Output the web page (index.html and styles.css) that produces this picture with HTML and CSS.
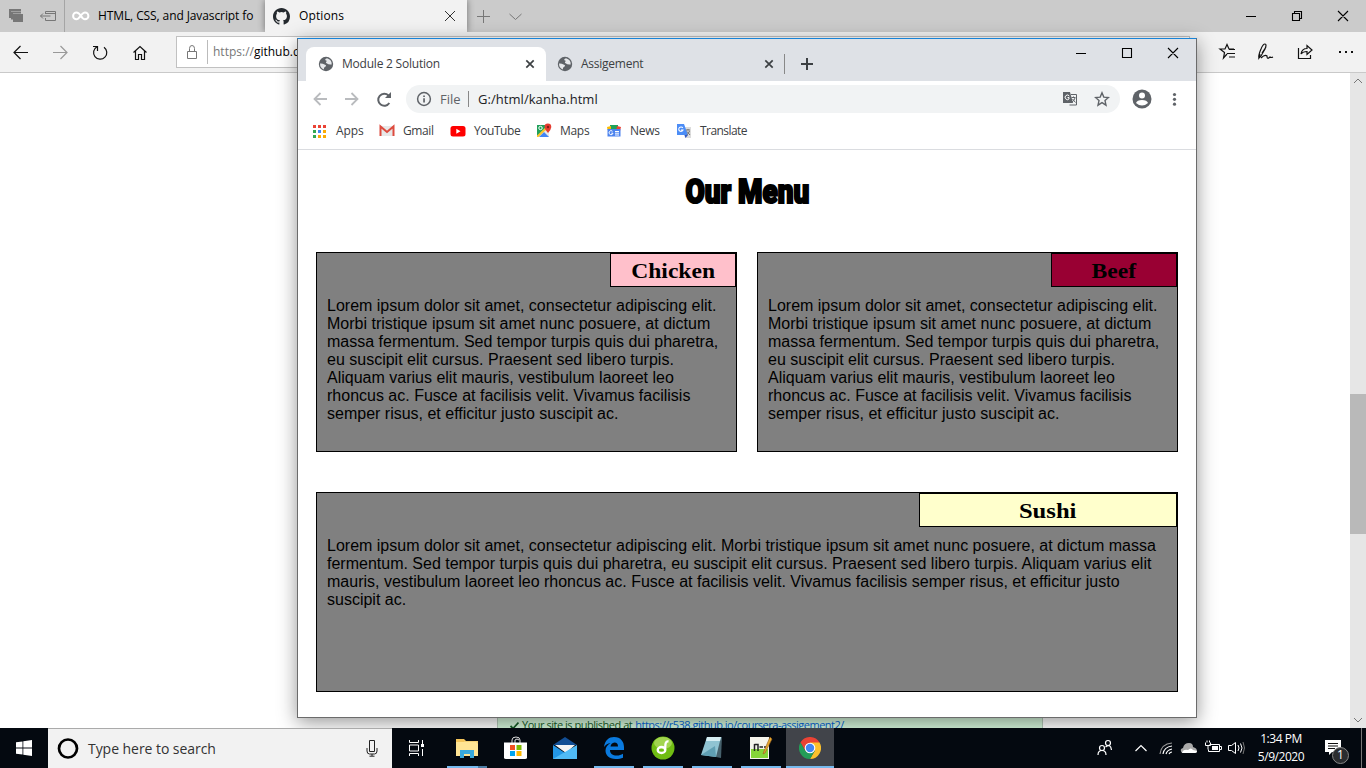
FILE: index.html
```html
<!DOCTYPE html>
<html lang="en">
<head>
<meta charset="utf-8">
<title>Desktop</title>
<link rel="stylesheet" href="styles.css">
</head>
<body>
<svg width="0" height="0" class="defs">
  <symbol id="globe" viewBox="0 0 16 16"><circle cx="8" cy="8" r="7.200" fill="#5f6368"/><path d="M2 7.500Q4.500 7.200 6.500 8.500Q9 9.500 7.500 10.500Q5.500 11.500 5.800 13.600Q2 12 2 7.500zM9 2.200Q6.800 2.800 7.200 4.200Q8.800 4 8.600 5.600Q7 6.800 9 7.400Q10.500 8.800 13.700 8.400Q14 3.800 9 2.200z" fill="#e6e8eb"/></symbol>
  <symbol id="cross" viewBox="0 0 12 12"><path d="M1 1L11 11M11 1L1 11" fill="none" stroke="#333" stroke-width="1"/></symbol>
  <symbol id="tabcross" viewBox="0 0 10 10"><path d="M1.300 1.300L8.700 8.700M8.700 1.300L1.300 8.700" fill="none" stroke="#3c4043" stroke-width="1.700"/></symbol>
</svg>
<div class="desktop">
  <div class="edge">
    <div class="edge-tabs">
      <svg class="ic aside" viewBox="0 0 64 32"><path d="M9 9h12v2H11v7H9zM11 11.500h10v2h-8v6h-2z" fill="#777"/><path d="M13 14h10v8H13z" fill="#777"/><path d="M45.500 14v-2.500h10v9h-10V18M45.500 13.500h10M40.500 16h10M43 13.500L40.500 16l2.500 2.500" fill="none" stroke="#777"/></svg>
      <div class="etab">
        <svg width="18" height="16" viewBox="0 0 18 16"><path d="M9 8C7 5 5.500 4.500 4.500 4.500a3.200 3.200 0 0 0 0 6.800C7.500 11.300 9.500 4.500 13 4.500a3.200 3.200 0 0 1 0 6.800C11.500 11.300 10.200 10 9 8z" fill="none" stroke="#fff" stroke-width="2"/></svg>
        <span class="etitle t-html">HTML, CSS, and Javascript fo</span>
      </div>
      <div class="etab on">
        <svg width="17" height="17" viewBox="0 0 16 16"><path fill="#24292e" d="M8 0C3.580 0 0 3.580 0 8c0 3.540 2.290 6.530 5.470 7.590.4.070.55-.17.55-.38 0-.19-.01-.82-.01-1.490-2.010.37-2.530-.49-2.690-.94-.09-.23-.48-.94-.82-1.130-.28-.15-.68-.52-.01-.53.63-.01 1.080.58 1.230.82.72 1.210 1.870.87 2.330.66.070-.52.28-.87.51-1.070-1.780-.2-3.640-.89-3.640-3.950 0-.87.31-1.590.82-2.150-.08-.2-.36-1.020.08-2.120 0 0 .67-.21 2.200.82a7.400 7.400 0 0 1 4 0c1.530-1.040 2.200-.82 2.200-.82.44 1.100.16 1.920.08 2.120.51.56.82 1.270.82 2.150 0 3.070-1.870 3.750-3.650 3.950.29.25.54.73.54 1.480 0 1.070-.01 1.930-.01 2.200 0 .21.15.46.55.38A8.010 8.010 0 0 0 16 8c0-4.420-3.580-8-8-8z"/></svg>
        <span class="etitle t-opt">Options</span>
        <svg class="x" width="12" height="12"><use href="#cross"/></svg>
      </div>
      <svg class="ic newtab" viewBox="0 0 64 32"><path d="M10 16.500h13M16.500 10v13M42.500 14l6 5.500 6-5.500" fill="none" stroke="#777"/></svg>
      <svg class="ic controls" viewBox="0 0 138 32"><path d="M18 16.500h10M64.500 13.500h7v7h-7zM66.500 13.500v-2h7v7h-2M110 11l10 10M120 11l-10 10" fill="none" stroke="#000" stroke-width="1.100"/></svg>
    </div>
    <div class="edge-bar">
      <svg class="ic nav" viewBox="0 0 176 40"><g fill="none" stroke="#111" stroke-width="1.200"><path d="M28 20.500H14M20.500 14L14 20.500l6.500 6.500"/><path d="M53 20.500h14M60.500 14l6.500 6.500-6.500 6.500" stroke="#999"/><path d="M97 14.800a6.600 6.600 0 1 0 7 .4M93 14.500h4.500v4.500"/><path d="M133.500 20.500l6.500-6 6.500 6M135.500 19v8.500h3v-5h3v5h3V19"/></g></svg>
      <div class="eaddr">
        <svg width="30" height="30" viewBox="0 0 30 30"><path d="M10.500 14.500h9v7h-9zM12.500 14v-2.500a2.500 3 0 0 1 5 0V14" fill="none" stroke="#777"/></svg>
        <span class="eurl"><i>https://</i>github.com</span>
      </div>
      <svg class="ic tools" viewBox="0 0 176 40"><g fill="none" stroke="#111" stroke-width="1.200"><path d="M37 22l-3.500 4 1-5.500-4.500-3.500h5l2-4.500 2 4.500h5M39 17.500h6M37 21.500h8M39 25h6"/><path d="M69 26Q68 24 71 17q2-5 4-5t0 5l-4 7-2 2 1-4M72 21l4-6M71 26q4-4 6-2 0 4 3 1 1 1 3 0"/><path d="M108.500 16v10.500h12V23M111 22q1-5.500 6-5.500v-3l5 4.500-5 4.500v-3q-4 0-6 2.500z"/></g><path d="M149 19h2v2h-2zM155 19h2v2h-2zM161 19h2v2h-2z" fill="#111"/></svg>
    </div>
    <div class="edge-page">
      <div class="viewport">
        <div class="flash"><svg width="9" height="9" viewBox="0 0 9 9"><path d="M.5 5l2.500 2.500L8.500 1.500" fill="none" stroke="#165c26" stroke-width="1.800"/></svg><span class="pub">Your site is published at</span><a>https://r538.github.io/coursera-assigement2/</a></div>
      </div>
      <div class="scroll">
        <svg width="16" height="17" viewBox="0 0 16 17"><path d="M4 10l4-4 4 4" fill="none" stroke="#777"/></svg>
        <div class="thumb"></div>
        <svg width="16" height="17" viewBox="0 0 16 17"><path d="M4 7l4 4 4-4" fill="none" stroke="#777"/></svg>
      </div>
    </div>
  </div>

  <div class="taskbar">
    <div class="start"><svg width="16" height="16" viewBox="0 0 16 16"><path d="M0 2.300L6.500 1.400V7.600H0zM7.300 1.300L16 0V7.600H7.300zM0 8.400h6.500v6.200L0 13.700zM7.300 8.400H16V16l-8.700-1.300z" fill="#fff"/></svg></div>
    <div class="search">
      <svg width="22" height="22" viewBox="0 0 22 22"><circle cx="11" cy="10.500" r="9" fill="none" stroke="#000" stroke-width="2.700"/></svg>
      <span class="stext">Type here to search</span>
      <svg class="mic" width="12" height="17" viewBox="0 0 12 17"><path d="M3.500.5h5v11h-5zM1 8v3q0 3 2.500 3h5q2.500 0 2.500-3V8M6 14v2M3.500 16.200h5" fill="none" stroke="#222"/></svg>
    </div>
    <div class="cell view"><svg width="18" height="16" viewBox="0 0 18 16"><path d="M1.500 0v2.500h9V0M1.500 5h9v6h-9zM1.500 16v-2.500h9V16M14.500 0v4M14.500 9v7" fill="none" stroke="#fff"/><path d="M13 4h3v3h-3z" fill="#fff"/></svg></div>
    <div class="apps">
      <div class="cell run split"><svg width="24" height="22" viewBox="0 0 24 22"><path d="M1 2h8l2 2h10v14H1z" fill="#f5c55a"/><path d="M9 4h14v15H9z" fill="#f3cf74"/><path d="M1 5h20l2 2v12H1z" fill="#ffe494"/><path d="M5 21v-8h14v8h-4v-4H9v4z" fill="#39a9dc"/></svg></div>
      <div class="cell"><svg width="24" height="24" viewBox="0 0 24 24"><path d="M8 7V4q0-3 4-3t4 3v3M11 7V4q2-2 4 0" fill="none" stroke="#ddd"/><path d="M0 6.500h23v15q0 1.500-2 1.500H2q-2 0-2-1.500z" fill="#fff"/><path d="M6 9h5v5H6z" fill="#f25022"/><path d="M12.500 9h5v5h-5z" fill="#7fba00"/><path d="M6 15h5v5H6z" fill="#00a4ef"/><path d="M12.500 15h5v5h-5z" fill="#ffb900"/></svg></div>
      <div class="cell"><svg width="24" height="24" viewBox="0 0 24 24"><path d="M0 9l12-8 12 8z" fill="#124e94"/><path d="M2 9h20l-9 8z" fill="#f4f4f4"/><path d="M0 9l12 8v6H0z" fill="#2396e5"/><path d="M24 9L0 23h24z" fill="#50baf5"/></svg></div>
      <div class="cell run"><svg width="22" height="22" viewBox="0 0 22 22"><path d="M1 10C2 3 6 0 11 0c7 0 10 5 10 10v3H7c0 4 3 5.500 6.500 5.500 3 0 4.500-.7 6.500-1.800v4C18 21.500 16 22 12.500 22 6 22 2.500 18 2.500 13.500c0-3 2-6 5-7.500Q3.500 6.500 1 10zM7.500 9.500H15Q15 5.500 11.500 5.500 8 6 7.500 9.500z" fill="#0a7ade"/></svg></div>
      <div class="cell run"><svg width="24" height="24" viewBox="0 0 24 24"><circle cx="12" cy="12" r="11.500" fill="#70bd13"/><ellipse cx="12" cy="7" rx="9" ry="6" fill="#b6df69" opacity=".7"/><ellipse cx="10.500" cy="14" rx="3.800" ry="3" fill="none" stroke="#fff" stroke-width="2.300"/><path d="M14 14l.5-6q.5-3 3-2.500" fill="none" stroke="#fff" stroke-width="2.300"/></svg></div>
      <div class="cell run"><svg width="24" height="24" viewBox="0 0 24 24"><path d="M7 1h15l-1 21-5-1z" fill="#46616c"/><path d="M7 1h14l-5 20-15-2z" fill="#8fc3d2"/><path d="M7 1h14l-1 4H6z" fill="#d5edf3"/><path d="M1 19L15 10l1 11z" fill="#609fb3"/></svg></div>
      <div class="cell run"><svg width="24" height="24" viewBox="0 0 24 24"><path d="M1 1h19v22H1z" fill="#f5f5ed"/><path d="M2 13h17v9H2z" fill="#85d638"/><path d="M5.500 15V8M5.500 8.500h3.500V15M10.500 11h3.500M15 11h3.500" fill="none" stroke="#222" stroke-width="1.500"/><path d="M21 1l2 2-7 14-2 1 1-3z" fill="#e7a92d" stroke="#965e20" stroke-width=".6"/></svg></div>
      <div class="cell run full"><svg width="22" height="22" viewBox="0 0 24 24"><path d="M12 12L1.600 6A12 12 0 0 1 22.400 6z" fill="#ea4335"/><path d="M12 6h10.400A12 12 0 0 1 12 24l5.200-9z" fill="#fbc02d"/><path d="M1.600 6L6.800 15 12 12V6z" fill="#ea4335"/><path d="M1.600 6L6.800 15 12 17 17.200 15 12 24A12 12 0 0 1 1.600 6z" fill="#249d58"/><circle cx="12" cy="12" r="5.800" fill="#fff"/><circle cx="12" cy="12" r="4.600" fill="#4285f4"/></svg></div>
    </div>
    <svg class="ic tray" viewBox="0 0 160 40"><g fill="none" stroke="#fff" stroke-width="1.200"><circle cx="12" cy="20" r="2.500"/><path d="M8 27q0-4.500 4-4.500t4 4.500"/><circle cx="18" cy="15" r="2.500"/><path d="M15.500 19q5-4 6 3"/><path d="M45.500 23l5.500-5.500 5.500 5.500"/><path d="M70 26q1-10 12-11" stroke="#999"/><path d="M73 26q1-7 9-8M76 26q1-4 6-5M79 26q1-2 3-2"/></g><path d="M92 25q-3-4 1-5 1-5 6-5 4 0 4 4 4 1 4 4 0 2-2 2z" fill="#aaa"/><path d="M92 25q1-4 6-3 3-3 5 0l4 1q0 2-2 2z" fill="#fff"/><g fill="none" stroke="#fff"><path d="M119.500 16.500h10v7h-11v-2M129.500 18.500h2v3h-2M115.500 14.500v3h5v-3M117 12.500v2M119.500 12.500v2M118 17.500v4"/><path d="M138.500 17.500h3l4-3v11l-4-3h-3zM148 17q2 3 0 6M150.500 15.500q3 4.500 0 9"/><path d="M153 14q3 6 0 12" stroke="#777"/></g><path d="M122 18h6v4h-6z" fill="#fff"/></svg>
    <div class="clock"><span class="time">1:34 PM</span><span class="date">5/9/2020</span></div>
    <div class="notif">
      <svg width="16" height="16" viewBox="0 0 16 16"><path d="M0 0h16v12H7l-3 3v-3H0z" fill="#fff"/><path d="M3 3.500h10M3 6h10M3 8.500h7" stroke="#111"/></svg>
      <span class="badge">1</span>
    </div>
  </div>

  <div class="chrome">
    <div class="ctabs">
      <div class="ctab on"><svg width="16" height="16"><use href="#globe"/></svg><span class="t-mod">Module 2 Solution</span><svg class="x" width="10" height="10"><use href="#tabcross"/></svg></div>
      <div class="ctab"><svg width="16" height="16"><use href="#globe"/></svg><span class="t-ass">Assigement</span><svg class="x" width="10" height="10"><use href="#tabcross"/></svg></div>
      <svg class="plus" width="12" height="12" viewBox="0 0 12 12"><path d="M0 6h12M6 0v12" stroke="#3c4043" stroke-width="2"/></svg>
      <svg class="ic ccontrols" viewBox="0 0 138 28"><path d="M18 14.500h10M64.500 9.500h9v9h-9zM110 9l10 10M120 9l-10 10" fill="none" stroke="#000" stroke-width="1.100"/></svg>
    </div>
    <div class="cbar">
      <svg class="ic cnav" viewBox="0 0 108 36"><g fill="none" stroke="#b9bbbe" stroke-width="1.800"><path d="M29 18H17M22.500 12L16.500 18l6 6"/><path d="M47 18h12M53.500 12l6 6-6 6"/><path d="M91.300 22a6 6 0 1 1-.8-7.500" stroke="#5f6368" stroke-width="2"/></g><path d="M93 11v6h-6z" fill="#5f6368"/></svg>
      <div class="omni">
        <svg width="16" height="16" viewBox="0 0 16 16"><circle cx="8" cy="8" r="6.400" fill="none" stroke="#5f6368" stroke-width="1.500"/><path d="M7.200 7.200h1.700v4.200H7.200zM7.200 4.500h1.700v1.600H7.200z" fill="#5f6368"/></svg>
        <span class="file">File</span><span class="curl">G:/html/kanha.html</span>
        <svg class="gt" width="16" height="16" viewBox="0 0 16 16"><path d="M1 1h7l3 11H1z" fill="#5f6368"/><path d="M9 3.500h5.500v10.500H7.500" fill="none" stroke="#5f6368"/><path d="M7.300 5A2.300 2.300 0 1 0 7 8V6.500H5.500" fill="none" stroke="#fff"/><path d="M9.500 6.500h4M11.500 5.500v1M13 7q-1 3-3 4M10.500 8l3 3.500" fill="none" stroke="#5f6368"/></svg>
        <svg class="star" width="16" height="16" viewBox="0 0 16 16"><path d="M8 1.800l1.800 4.300 4.700.4-3.500 3.100 1 4.600-4-2.500-4 2.500 1-4.600-3.500-3.100 4.700-.4z" fill="none" stroke="#5f6368" stroke-width="1.400"/></svg>
      </div>
      <svg class="ic prof" viewBox="0 0 76 36"><circle cx="22" cy="18" r="9.500" fill="#5f6368"/><circle cx="22" cy="14.500" r="3" fill="#fff"/><path d="M16 22q1-3 6-3t6 3q-6 5-12 0z" fill="#fff"/><g fill="#5f6368"><circle cx="54.500" cy="13.500" r="1.600"/><circle cx="54.500" cy="18.300" r="1.600"/><circle cx="54.500" cy="23.200" r="1.600"/></g></svg>
    </div>
    <div class="marks">
      <div class="mark m1"><svg width="15" height="15" viewBox="0 0 15 15"><path d="M1 1h3v3H1zM6 1h3v3H6zM11 1h3v3h-3z" fill="#ea4335"/><path d="M1 6h3v3H1zM1 11h3v3H1z" fill="#34a853"/><path d="M6 6h3v3H6z" fill="#4285f4"/><path d="M11 6h3v3h-3zM6 11h3v3H6zM11 11h3v3h-3z" fill="#fbab05"/></svg><span>Apps</span></div>
      <div class="mark m2"><svg width="16" height="16" viewBox="0 0 16 16"><path d="M1 3h14v10H1z" fill="#e8e8e8"/><path d="M1.500 13V3.500L8 9l6.500-5.500V13" fill="none" stroke="#dd4b3e" stroke-width="2"/></svg><span>Gmail</span></div>
      <div class="mark m3"><svg width="16" height="16" viewBox="0 0 16 16"><rect x=".5" y="3" width="15" height="10.500" rx="2.500" fill="#f00"/><path d="M6.300 5.800v5l4.200-2.500z" fill="#fff"/></svg><span>YouTube</span></div>
      <div class="mark m4"><svg width="16" height="16" viewBox="0 0 16 16"><path d="M1 2h12v12H1z" fill="#20a05a"/><path d="M1 14L13 3v11z" fill="#e7e9e8"/><path d="M3 14l5-5 5 5z" fill="#4285f4"/><path d="M1 12.500L12 2v3L2.500 14H1z" fill="#fbc52d"/><circle cx="4.500" cy="5" r="1.700" fill="none" stroke="#fff"/><path d="M8.500 4a3.400 3.400 0 0 1 6.800 0Q15 7 12 10 9 7 8.500 4z" fill="#e53b30"/><circle cx="12" cy="4" r="1.200" fill="#812019"/></svg><span>Maps</span></div>
      <div class="mark m5"><svg width="16" height="16" viewBox="0 0 16 16"><path d="M4 2h8v5H4z" fill="#1ea25a"/><path d="M1 4l4-1v4H1.500z" fill="#fbbc04"/><path d="M11 3l4 1-1 4h-4z" fill="#ea4335"/><path d="M1.500 6h13v7.500h-13z" fill="#4c83ee"/><path d="M6.500 8.300A2 2 0 1 0 7 10.200H5.300M9 8.500h4M9 10.200h4M9 12h4" fill="none" stroke="#fff"/></svg><span>News</span></div>
      <div class="mark m6"><svg width="16" height="16" viewBox="0 0 16 16"><path d="M7 4h8v11H9z" fill="#dcdcdc"/><path d="M1 1h7l4 11H1z" fill="#4c8df6"/><path d="M8.500 12h3.500l-2.500 3z" fill="#3057c5"/><path d="M6.800 4.900A2.200 2.200 0 1 0 7 7H5" fill="none" stroke="#fff" stroke-width="1.100"/><path d="M10 7h4M12 6v1M13.500 8q-1 3-3 4M11 8.500l3 3.500" fill="none" stroke="#707070"/></svg><span>Translate</span></div>
    </div>
    <div class="content">
      <h1><span>Our Menu</span></h1>
      <div class="menu">
        <section><h2 class="pink"><span>Chicken</span></h2><p>Lorem ipsum dolor sit amet, consectetur adipiscing elit.<br>Morbi tristique ipsum sit amet nunc posuere, at dictum<br>massa fermentum. Sed tempor turpis quis dui pharetra,<br>eu suscipit elit cursus. Praesent sed libero turpis.<br>Aliquam varius elit mauris, vestibulum laoreet leo<br>rhoncus ac. Fusce at facilisis velit. Vivamus facilisis<br>semper risus, et efficitur justo suscipit ac.</p></section>
        <section><h2 class="beef"><span>Beef</span></h2><p>Lorem ipsum dolor sit amet, consectetur adipiscing elit.<br>Morbi tristique ipsum sit amet nunc posuere, at dictum<br>massa fermentum. Sed tempor turpis quis dui pharetra,<br>eu suscipit elit cursus. Praesent sed libero turpis.<br>Aliquam varius elit mauris, vestibulum laoreet leo<br>rhoncus ac. Fusce at facilisis velit. Vivamus facilisis<br>semper risus, et efficitur justo suscipit ac.</p></section>
        <section class="wide"><h2 class="sushi"><span>Sushi</span></h2><p>Lorem ipsum dolor sit amet, consectetur adipiscing elit. Morbi tristique ipsum sit amet nunc posuere, at dictum massa<br>fermentum. Sed tempor turpis quis dui pharetra, eu suscipit elit cursus. Praesent sed libero turpis. Aliquam varius elit<br>mauris, vestibulum laoreet leo rhoncus ac. Fusce at facilisis velit. Vivamus facilisis semper risus, et efficitur justo<br>suscipit ac.</p></section>
      </div>
    </div>
  </div>
</div>
</body>
</html>
```
FILE: styles.css
```css
* { box-sizing: border-box; }
body { margin: 0; font-family: "Open Sans", "Noto Sans", sans-serif; font-size: 12px; overflow: hidden; }
svg { flex: none; display: block; }
span, a { white-space: nowrap; }
.defs { position: absolute; }
.desktop { position: relative; width: 1366px; height: 768px; display: flex; flex-direction: column; overflow: hidden; }
.edge { height: 728px; display: flex; flex-direction: column; overflow: hidden; }
.edge-tabs { height: 32px; background: #cbcbcb; display: flex; }
.aside { width: 64px; height: 32px; }
.etab { width: 201px; border-left: 1px solid #a5a5a5; display: flex; align-items: center; padding: 0 8px 0 7px; overflow: hidden; }
.etab.on { width: 202px; background: #f2f2f2; border: 0; padding: 0 11px 0 8px; box-shadow: 0 0 7px rgba(0,0,0,.45); clip-path: inset(0 -8px 0 -8px); }
.etitle { margin-left: 9px; line-height: 18px; }
.etab:not(.on) .etitle { margin-left: 8px; }
.t-html { letter-spacing: -.1px; width: 158px; overflow: hidden; }
.t-opt { letter-spacing: .1px; }
.x { margin-left: auto; }
.newtab { width: 64px; height: 32px; }
.controls { width: 138px; height: 32px; margin-left: auto; }
.edge-bar { height: 41px; background: #f2f2f2; border-bottom: 1px solid #c9c9c9; display: flex; }
.nav { width: 176px; height: 40px; }
.eaddr { width: 1014px; height: 32px; margin-top: 4px; border: 1px solid #c1c1c1; background: #fff; display: flex; align-items: center; }
.eurl { border-left: 1px solid #bbb; height: 24px; line-height: 23px; padding-left: 5px; }
.eurl i { font-style: normal; color: #777; }
.tools { width: 176px; height: 40px; }
.edge-page { flex: 1; display: flex; background: #fff; min-height: 0; }
.viewport { width: 1350px; display: flex; align-items: flex-end; overflow: hidden; }
.flash { margin-left: 497px; width: 546px; height: 16px; background: #d4f5da; border: 1px solid #b5c9b9; border-width: 0 1px; padding: 5px 0 0 12px; display: flex; font-size: 11px; line-height: 16px; color: #165c26; }
.flash svg { margin-top: 4px; }
.pub { margin-left: 3px; letter-spacing: -.48px; }
.flash a { color: #0366d6; text-decoration: underline; margin-left: 3px; letter-spacing: -.5px; }
.scroll { width: 16px; background: #e6e6e6; display: flex; flex-direction: column; justify-content: space-between; }
.thumb { height: 140px; margin-top: 127px; background: #b9b9b9; }

.taskbar { position: relative; z-index: 3; height: 40px; background: #040910; display: flex; color: #fff; }
.start { width: 48px; display: grid; place-items: center; }
.search { width: 344px; background: #f2f2f2; border-top: 1px solid #aaa; display: flex; align-items: center; padding: 0 14px 0 9px; }
.stext { margin-left: 9px; font-size: 14px; letter-spacing: -.05px; color: #333; }
.mic { margin-left: auto; }
.cell { width: 48px; display: grid; place-items: center; }
.view { width: 51px; padding-right: 1px; }
.apps { display: flex; gap: 1px; }
.run { background: linear-gradient(#76b9ed, #76b9ed) 50% 100% / 40px 2px no-repeat; }
.split { background: linear-gradient(90deg, #76b9ed 31px, #4c7da4 31px) 50% 100% / 40px 2px no-repeat; }
.full { background: linear-gradient(#76b9ed, #76b9ed) 0 100% / 48px 2px no-repeat #41444a; }
.tray { width: 160px; height: 40px; margin-left: 256px; }
.clock { width: 62px; display: flex; flex-direction: column; align-items: center; padding-top: 2px; line-height: 18px; letter-spacing: -.45px; }
.notif { position: relative; width: 50px; border-right: 1px solid #777; padding: 12px 0 0 13px; }
.badge { position: absolute; left: 20px; top: 19px; width: 17px; height: 17px; border: 1px solid #888; border-radius: 50%; background: #2b2d30; font-size: 12px; line-height: 14px; text-align: center; }

.chrome { position: absolute; left: 297px; top: 38px; width: 900px; height: 680px; background: #fff; border: 1px solid #6b6b6b; border-top-color: #1883d7; box-shadow: 0 4px 18px rgba(0,0,0,.42); display: flex; flex-direction: column; color: #3c4043; }
.ctabs { height: 42px; background: #dee1e6; display: flex; padding: 8px 0 0 8px; }
.ctab { width: 239px; height: 34px; display: flex; align-items: center; padding: 0 11px 0 11px; }
.ctab:not(.on) { height: 20px; margin-top: 7px; border-right: 1px solid #888; padding-right: 10px; }
.ctab.on { width: 240px; background: #fff; border-radius: 8px 8px 0 0; padding-left: 12px; }
.ctab span { margin-left: 8px; padding-bottom: 2px; }
.t-mod { letter-spacing: -.22px; }
.t-ass { letter-spacing: -.25px; }
.plus { margin: 11px 0 0 16px; }
.ccontrols { width: 138px; height: 28px; margin: -8px 0 0 auto; }
.cbar { height: 36px; display: flex; align-items: center; }
.cnav { width: 108px; height: 36px; }
.omni { width: 714px; height: 28px; border-radius: 14px; background: #f1f3f4; display: flex; align-items: center; padding: 0 10px; }
.file { margin-left: 8px; width: 29px; color: #5f6368; border-right: 1px solid #888; font-size: 13px; line-height: 16px; }
.curl { margin-left: 9px; font-size: 13px; letter-spacing: .05px; color: #202124; }
.gt { margin-left: auto; }
.star { margin-left: 16px; }
.prof { width: 76px; height: 36px; }
.marks { height: 33px; border-bottom: 1px solid #dadce0; display: flex; align-items: center; padding: 0 0 4px 14px; letter-spacing: -.3px; }
.mark { display: flex; align-items: center; gap: 8px; width: 71px; }
.mark span { padding-bottom: 1px; }
.m1 { width: 67px; gap: 9px; letter-spacing: -.1px; } .m2 { letter-spacing: -.4px; } .m3 { width: 86px; letter-spacing: -.45px; } .m4 { width: 70px; } .m5 { width: 70px; } .m6 { letter-spacing: -.6px; }
.m6 { letter-spacing: -.55px; }

.content { padding: 0 18px; }
h1 { margin: 0; height: 102px; padding-top: 21px; text-align: center; font: 900 34px/41px Roboto, sans-serif; color: #000; }
h1 span { display: inline-block; transform: scaleX(.82); -webkit-text-stroke: 2.2px #000; }
.menu { display: grid; grid-template-columns: 421px 421px; gap: 40px 20px; color: #000; }
section { height: 200px; border: 1px solid #000; background: #808080; }
.wide { grid-column: 1 / 3; }
h2 { margin: 0 0 0 auto; width: 126px; height: 34px; border: 1px solid #000; text-align: center; font: bold 22px/33px "Liberation Serif", serif; }
h2 span { display: inline-block; transform: scaleX(1.07); }
.pink { background: #ffc0cb; }
.beef { background: #990033; }
.sushi { background: #ffffcc; width: 258px; }
.sushi span { transform: scaleX(1.12); }
p { margin: 10px 0 0 10px; font: 16px/18px "Liberation Sans", Arial, sans-serif; white-space: nowrap; }
```
